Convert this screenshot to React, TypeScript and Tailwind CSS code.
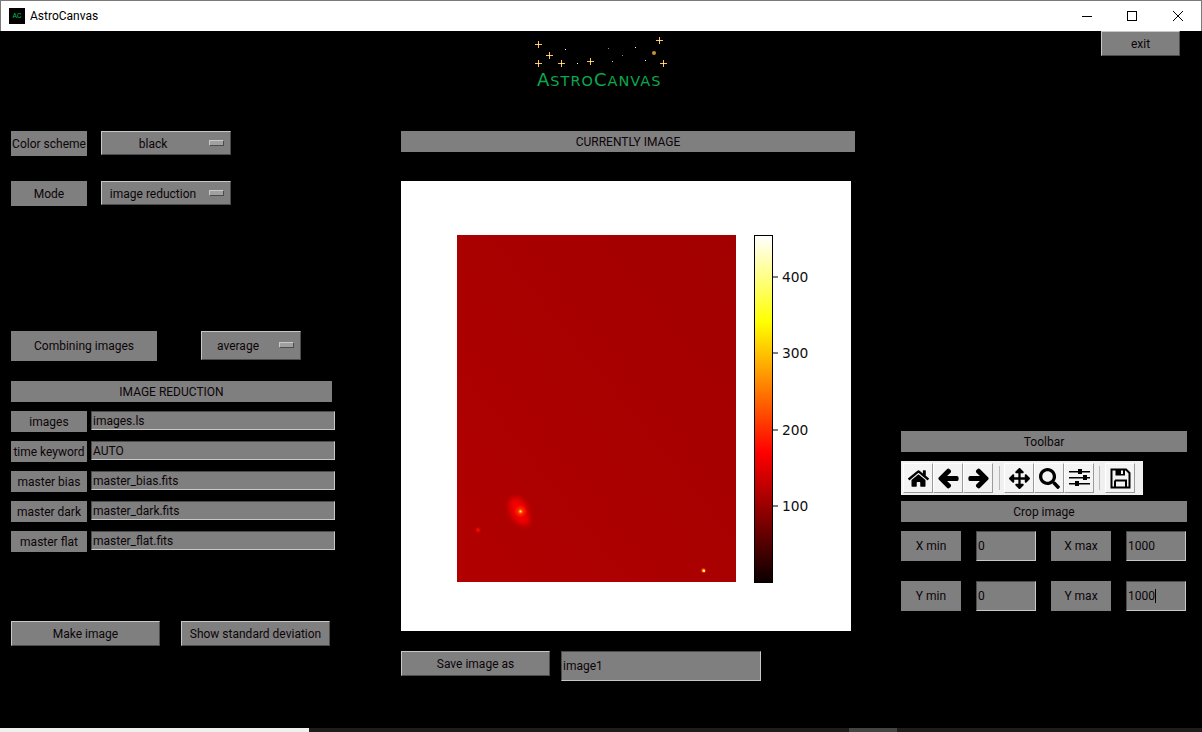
import type { ReactNode } from "react";
import {
  FaArrowLeft,
  FaArrowRight,
  FaArrowsAlt,
  FaHome,
  FaSearch,
} from "react-icons/fa";

const raised =
  "border border-t-[#c8c8c8] border-l-[#c8c8c8] border-r-[#4c4c4c] border-b-[#4c4c4c]";
const sunken =
  "border border-t-[#4c4c4c] border-l-[#4c4c4c] border-r-[#c8c8c8] border-b-[#c8c8c8]";

function Label({ className, children }: { className: string; children: ReactNode }) {
  return (
    <div className={`flex shrink-0 items-center justify-center whitespace-nowrap bg-[#7f7f7f] ${className}`}>
      {children}
    </div>
  );
}

function Btn({ className, children }: { className: string; children: ReactNode }) {
  return (
    <div className={`flex shrink-0 items-center justify-center whitespace-nowrap bg-[#7f7f7f] ${raised} ${className}`}>
      {children}
    </div>
  );
}

function Entry({ className, children }: { className: string; children: ReactNode }) {
  return (
    <div className={`flex shrink-0 items-center whitespace-nowrap bg-[#7f7f7f] pl-[1px] ${sunken} ${className}`}>
      {children}
    </div>
  );
}

function Dropdown({ className, value }: { className: string; value: string }) {
  return (
    <div className={`flex shrink-0 items-center bg-[#7f7f7f] ${raised} ${className}`}>
      <span className="flex-1 whitespace-nowrap pr-[5px] pt-[1px] text-center">{value}</span>
      <span className={`mb-[1px] mr-[6px] h-[6px] w-[15px] shrink-0 bg-[#a0a0a0] ${raised}`} />
    </div>
  );
}

function Logo() {
  const big = [
    [8, 9],
    [19, 20],
    [8, 28],
    [31, 28],
    [60, 26],
    [129, 5],
    [133, 28],
  ];
  const dots = [
    [35, 14, "#ffffff"],
    [47, 28, "#ffffff"],
    [78, 13, "#8a8a8a"],
    [92, 20, "#8a8a8a"],
    [105, 12, "#ffffff"],
    [82, 26, "#c8c8c8"],
    [115, 25, "#ffffff"],
  ] as const;
  return (
    <div className="ml-[129px] w-[146px] pt-[4px]">
      <svg width="146" height="35" viewBox="0 0 146 35" className="block">
        {big.map(([x, y]) => (
          <g key={`${x}-${y}`}>
            <path
              d={`M${x - 3} ${y + 0.5}H${x + 4}M${x + 0.5} ${y - 3}V${y + 4}`}
              stroke="#f7c94e"
              strokeWidth="1"
            />
            <rect x={x} y={y} width="1" height="1" fill="#fff0b8" />
          </g>
        ))}
        <circle cx="124" cy="18" r="2" fill="#c8923a" />
        {dots.map(([x, y, c]) => (
          <rect key={`${x}-${y}`} x={x} y={y} width="1" height="1" fill={c} />
        ))}
      </svg>
      <div className="ml-[7px] whitespace-nowrap text-[18px] leading-[20px] tracking-[1px] text-[#0aa84c] [font-family:'DejaVu_Sans',sans-serif]">
        A<span className="text-[14.500px] uppercase">stro</span>C<span className="text-[14.500px] uppercase">anvas</span>
      </div>
    </div>
  );
}

function Plot() {
  const ticks = [
    [96, "400"],
    [172, "300"],
    [249, "200"],
    [325, "100"],
  ] as const;
  return (
    <svg width="450" height="450" viewBox="0 0 450 450" className="mt-[29px] block bg-white">
      <defs>
        <linearGradient id="sky" x1="0" y1="1" x2="1" y2="0">
          <stop offset="0" stopColor="#b20000" />
          <stop offset="0.5" stopColor="#a90000" />
          <stop offset="1" stopColor="#a20000" />
        </linearGradient>
        <linearGradient id="hot" x1="0" y1="1" x2="0" y2="0">
          <stop offset="0" stopColor="#0a0000" />
          <stop offset="0.375" stopColor="#ff0000" />
          <stop offset="0.75" stopColor="#ffff00" />
          <stop offset="1" stopColor="#ffffff" />
        </linearGradient>
        <radialGradient id="core">
          <stop offset="0" stopColor="#ffff40" />
          <stop offset="0.4" stopColor="#ff8000" />
          <stop offset="1" stopColor="#ff1000" stopOpacity="0" />
        </radialGradient>
        <filter id="soft" x="-60%" y="-60%" width="220%" height="220%">
          <feGaussianBlur stdDeviation="2.500" />
        </filter>
        <filter id="softer" x="-60%" y="-60%" width="220%" height="220%">
          <feGaussianBlur stdDeviation="1" />
        </filter>
      </defs>
      <rect x="56" y="54" width="279" height="347" fill="url(#sky)" />
      <g filter="url(#soft)">
        <ellipse cx="118" cy="330" rx="9" ry="14" fill="#ee0000" transform="rotate(-20 118 330)" />
        <ellipse cx="114" cy="322" rx="6" ry="5" fill="#f40000" />
        <ellipse cx="124" cy="340" rx="5" ry="4" fill="#f40000" />
      </g>
      <circle cx="119.500" cy="330.500" r="5" fill="#ff2000" filter="url(#softer)" />
      <circle cx="119.500" cy="330.500" r="3.500" fill="url(#core)" />
      <circle cx="77" cy="349" r="2" fill="#ff1000" filter="url(#softer)" />
      <circle cx="302.500" cy="389.500" r="3" fill="url(#core)" />
      <rect x="302" y="389" width="2" height="2" fill="#ffff60" />

      <rect x="353.500" y="54.500" width="18" height="347" fill="url(#hot)" stroke="#000" strokeWidth="1" />
      {ticks.map(([y, label]) => (
        <g key={label}>
          <line x1="372" x2="377" y1={y} y2={y} stroke="#000" strokeWidth="1" />
          <text x="381" y={y + 5} fontSize="13.800" fill="#111" fontFamily="'DejaVu Sans', sans-serif">
            {label}
          </text>
        </g>
      ))}
    </svg>
  );
}

function ToolBtn({ children }: { children: ReactNode }) {
  return (
    <div className="flex h-[30px] w-[30px] shrink-0 items-center justify-center border border-t-white border-l-white border-r-[#9a9a9a] border-b-[#9a9a9a] bg-[#f4f4f4] text-black">
      {children}
    </div>
  );
}

function SlidersIcon() {
  return (
    <svg width="21" height="20" viewBox="0 0 21 20" fill="#000">
      <rect x="0" y="3" width="21" height="1.500" />
      <rect x="0" y="9" width="21" height="1.500" />
      <rect x="0" y="15" width="21" height="1.500" />
      <rect x="9" y="1" width="4" height="5" />
      <rect x="14" y="7" width="4" height="5" />
      <rect x="6" y="13" width="4" height="5" />
    </svg>
  );
}

function SaveIcon() {
  return (
    <svg width="21" height="21" viewBox="0 0 21 21" fill="none" stroke="#000" strokeWidth="2">
      <path d="M1.500 1.500H16L19.500 5V19.500H1.500Z" />
      <path d="M5 12.500H16V19" />
      <path d="M5 12.500V19" />
      <path d="M5.500 1.500H15V7.500H5.500Z" fill="#000" stroke="none" />
      <rect x="11" y="2.500" width="2" height="3.500" fill="#f4f4f4" stroke="none" />
    </svg>
  );
}

function Toolbar() {
  return (
    <div className="mt-[9px] flex h-[34px] w-[242px] items-center bg-[#f0f0f0] pl-[2px] text-[21px]">
      <ToolBtn><FaHome /></ToolBtn>
      <ToolBtn><FaArrowLeft className="stroke-[45]" /></ToolBtn>
      <ToolBtn><FaArrowRight className="stroke-[45]" /></ToolBtn>
      <span className="ml-[6px] mr-[4px] h-[24px] w-[1px] bg-[#b8b8b8]" />
      <ToolBtn><FaArrowsAlt /></ToolBtn>
      <ToolBtn><FaSearch /></ToolBtn>
      <ToolBtn><SlidersIcon /></ToolBtn>
      <span className="ml-[5px] mr-[5px] h-[24px] w-[1px] bg-[#b8b8b8]" />
      <ToolBtn><SaveIcon /></ToolBtn>
    </div>
  );
}

export default function App() {
  const reduction = [
    ["images", "images.ls"],
    ["time keyword", "AUTO"],
    ["master bias", "master_bias.fits"],
    ["master dark", "master_dark.fits"],
    ["master flat", "master_flat.fits"],
  ];

  return (
    <div className="flex h-[732px] w-[1202px] flex-col overflow-hidden bg-black text-[12px] leading-none text-[#0c0408] [font-family:Roboto,'Noto_Sans',sans-serif]">
      {/* title bar */}
      <div className="flex h-[31px] shrink-0 items-center border-x border-t border-[#7a7a7a] bg-white text-black">
        <div className="ml-[8px] flex h-[16px] w-[16px] items-center justify-center bg-black text-[7px] text-[#0ac050]">
          AC
        </div>
        <span className="ml-[5px] flex-1">AstroCanvas</span>
        <svg width="10" height="10" viewBox="0 0 10 10" className="mr-[35px]" fill="none" stroke="#000">
          <path d="M0 5.500H10" />
        </svg>
        <svg width="10" height="10" viewBox="0 0 10 10" className="mr-[36px]" fill="none" stroke="#000">
          <rect x="0.500" y="0.500" width="9" height="9" />
        </svg>
        <svg width="10" height="10" viewBox="0 0 10 10" className="mr-[18px]" fill="none" stroke="#000">
          <path d="M0 0L10 10M10 0L0 10" />
        </svg>
      </div>

      <div className="flex min-h-0 flex-1 pl-[1px]">
        {/* left column */}
        <div className="w-[400px] shrink-0 pl-[10px] pt-[100px]">
          <div className="flex">
            <Label className="h-[25px] w-[76px]">Color scheme</Label>
            <Dropdown className="ml-[14px] h-[24px] w-[130px]" value="black" />
          </div>
          <div className="mt-[25px] flex">
            <Label className="h-[25px] w-[76px]">Mode</Label>
            <Dropdown className="ml-[14px] h-[24px] w-[130px]" value="image reduction" />
          </div>
          <div className="mt-[125px] flex">
            <Label className="h-[30px] w-[146px]">Combining images</Label>
            <Dropdown className="ml-[44px] h-[29px] w-[100px]" value="average" />
          </div>
          <Label className="mt-[20px] h-[21px] w-[321px]">IMAGE REDUCTION</Label>
          <div className="mt-[9px] flex flex-col gap-[9px]">
            {reduction.map(([name, value]) => (
              <div key={name} className="flex">
                <Label className="h-[21px] w-[76px]">{name}</Label>
                <Entry className="ml-[4px] h-[19px] w-[244px]">{value}</Entry>
              </div>
            ))}
          </div>
          <div className="mt-[69px] flex">
            <Btn className="h-[25px] w-[149px]">Make image</Btn>
            <Btn className="ml-[21px] h-[25px] w-[149px]">Show standard deviation</Btn>
          </div>
        </div>

        {/* center column */}
        <div className="w-[500px] shrink-0">
          <div className="h-[100px]">
            <Logo />
          </div>
          <Label className="h-[21px] w-[454px]">CURRENTLY IMAGE</Label>
          <Plot />
          <div className="mt-[20px] flex items-start">
            <Btn className="h-[25px] w-[149px]">Save image as</Btn>
            <Entry className="ml-[11px] h-[30px] w-[200px]">image1</Entry>
          </div>
        </div>

        {/* right column */}
        <div className="flex-1">
          <Btn className="ml-[200px] h-[25px] w-[79px]">exit</Btn>
          <Label className="mt-[375px] h-[21px] w-[286px]">Toolbar</Label>
          <Toolbar />
          <Label className="mt-[6px] h-[21px] w-[286px]">Crop image</Label>
          <div className="mt-[9px] flex">
            <Label className="h-[30px] w-[60px]">X min</Label>
            <Entry className="ml-[15px] h-[30px] w-[60px]">0</Entry>
            <Label className="ml-[15px] h-[30px] w-[60px]">X max</Label>
            <Entry className="ml-[15px] h-[30px] w-[60px]">1000</Entry>
          </div>
          <div className="mt-[20px] flex">
            <Label className="h-[30px] w-[60px]">Y min</Label>
            <Entry className="ml-[15px] h-[30px] w-[60px]">0</Entry>
            <Label className="ml-[15px] h-[30px] w-[60px]">Y max</Label>
            <Entry className="ml-[15px] h-[30px] w-[60px]">
              1000<span className="h-[14px] w-[1px] bg-black" />
            </Entry>
          </div>
        </div>
      </div>

      {/* whatever sits behind the window at the bottom edge */}
      <div className="flex h-[4px] shrink-0">
        <div className="w-[309px] bg-[#f0f0f0]" />
        <div className="w-[540px] bg-[#1f1c1c]" />
        <div className="w-[48px] bg-[#444444]" />
        <div className="flex-1 bg-[#1f1c1c]" />
      </div>
    </div>
  );
}
